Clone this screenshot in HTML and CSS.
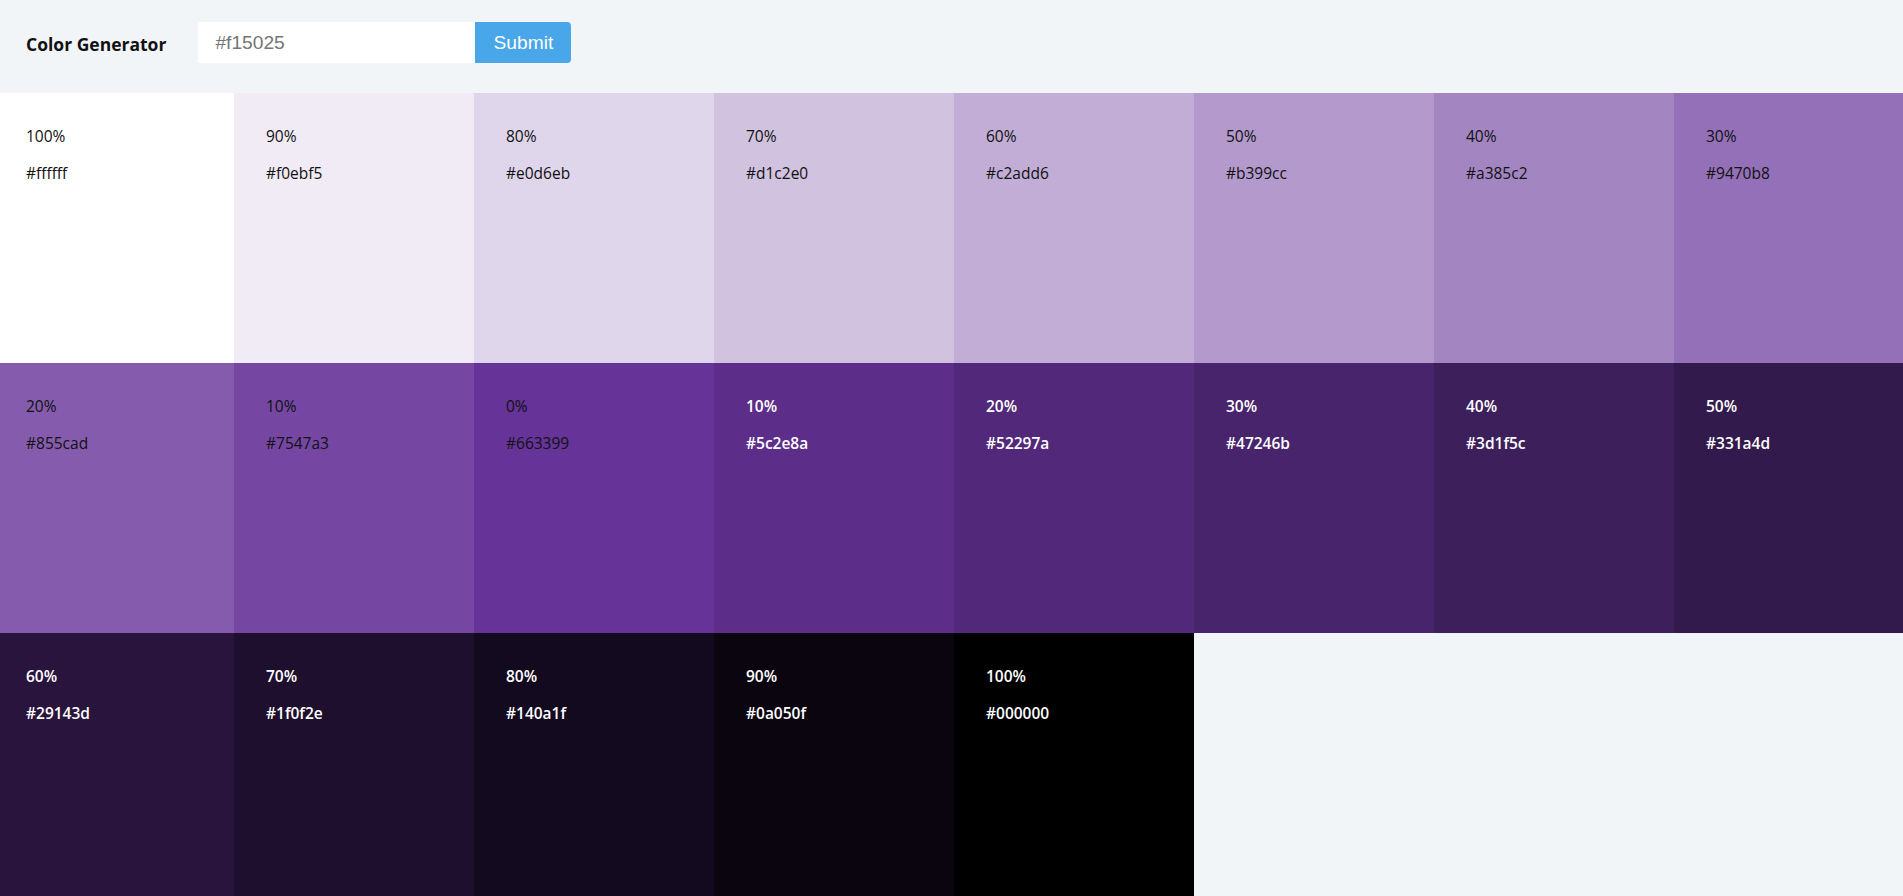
FILE: index.html
```html
<!DOCTYPE html>
<html lang="en">
<head>
<meta charset="utf-8">
<title>Color Generator</title>
<link rel="stylesheet" href="styles.css">
</head>
<body>
<div class="page">
  <section class="header">
    <h3 class="title">Color Generator</h3>
    <form class="form">
      <input class="input" type="text" value="#f15025">
      <button class="btn" type="button">Submit</button>
    </form>
  </section>
  <section class="colors">
    <article class="color" style="background:#ffffff"><p class="percent">100%</p><p class="hex">#ffffff</p></article>
    <article class="color" style="background:#f0ebf5"><p class="percent">90%</p><p class="hex">#f0ebf5</p></article>
    <article class="color" style="background:#e0d6eb"><p class="percent">80%</p><p class="hex">#e0d6eb</p></article>
    <article class="color" style="background:#d1c2e0"><p class="percent">70%</p><p class="hex">#d1c2e0</p></article>
    <article class="color" style="background:#c2add6"><p class="percent">60%</p><p class="hex">#c2add6</p></article>
    <article class="color" style="background:#b399cc"><p class="percent">50%</p><p class="hex">#b399cc</p></article>
    <article class="color" style="background:#a385c2"><p class="percent">40%</p><p class="hex">#a385c2</p></article>
    <article class="color" style="background:#9470b8"><p class="percent">30%</p><p class="hex">#9470b8</p></article>
    <article class="color" style="background:#855cad"><p class="percent">20%</p><p class="hex">#855cad</p></article>
    <article class="color" style="background:#7547a3"><p class="percent">10%</p><p class="hex">#7547a3</p></article>
    <article class="color" style="background:#663399"><p class="percent">0%</p><p class="hex">#663399</p></article>
    <article class="color light" style="background:#5c2e8a"><p class="percent">10%</p><p class="hex">#5c2e8a</p></article>
    <article class="color light" style="background:#52297a"><p class="percent">20%</p><p class="hex">#52297a</p></article>
    <article class="color light" style="background:#47246b"><p class="percent">30%</p><p class="hex">#47246b</p></article>
    <article class="color light" style="background:#3d1f5c"><p class="percent">40%</p><p class="hex">#3d1f5c</p></article>
    <article class="color light" style="background:#331a4d"><p class="percent">50%</p><p class="hex">#331a4d</p></article>
    <article class="color light" style="background:#29143d"><p class="percent">60%</p><p class="hex">#29143d</p></article>
    <article class="color light" style="background:#1f0f2e"><p class="percent">70%</p><p class="hex">#1f0f2e</p></article>
    <article class="color light" style="background:#140a1f"><p class="percent">80%</p><p class="hex">#140a1f</p></article>
    <article class="color light" style="background:#0a050f"><p class="percent">90%</p><p class="hex">#0a050f</p></article>
    <article class="color light" style="background:#000000"><p class="percent">100%</p><p class="hex">#000000</p></article>
  </section>
</div>
</body>
</html>
```
FILE: styles.css
```css
* { box-sizing: border-box; }

html, body {
  margin: 0;
  padding: 0;
  background: #f1f5f8;
  overflow: hidden;
  font-family: "Open Sans", "Noto Sans", sans-serif;
}

.page {
  margin-left: -6px;
  width: 1920px;
}

.header {
  height: 93px;
  display: flex;
  align-items: center;
  padding-left: 32px;
}

.title {
  margin: 0 32px 0 0;
  font-size: 17.5px;
  font-weight: 700;
  color: #111;
  line-height: 1;
  padding-bottom: 4px;
}

.form {
  display: flex;
  margin-top: -8px;
}

.input {
  width: 277px;
  height: 41px;
  border: none;
  outline: none;
  padding: 0 17px;
  font-family: "Liberation Sans", Arial, sans-serif;
  font-size: 19.2px;
  color: #757575;
  background: #fff;
  border-radius: 0;
}

.btn {
  width: 96px;
  height: 41px;
  border: none;
  background: #49a6e9;
  color: #fff;
  font-family: "Liberation Sans", Arial, sans-serif;
  font-size: 19.2px;
  border-radius: 0 4px 4px 0;
  padding: 0;
}

.colors {
  display: grid;
  grid-template-columns: repeat(8, 240px);
  grid-auto-rows: 270px;
}

.color {
  padding: 32px 32px;
  color: #111;
  font-size: 15.5px;
  line-height: 22px;
  font-weight: 500;
}

.color p {
  margin: 0;
}

.color .hex {
  margin-top: 15px;
}

.color.light {
  color: #fff;
  font-weight: 600;
}
```
